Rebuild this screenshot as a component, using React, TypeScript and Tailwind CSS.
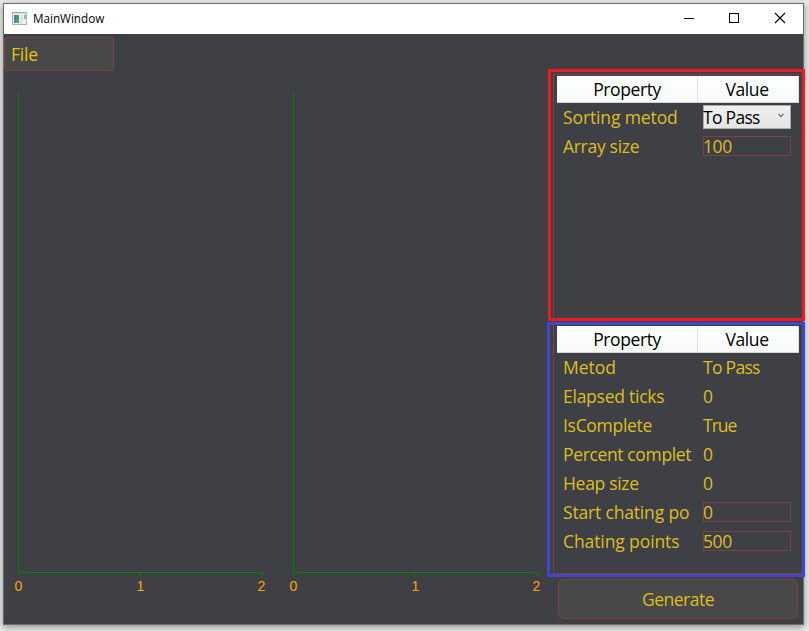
import React from "react";

type Kind = "text" | "input" | "select";
type Row = { label: string; value: string; kind: Kind; track: string; valueTrack: string };

const settings: Row[] = [
  { label: "Sorting metod", value: "To Pass", kind: "select", track: "tracking-[-0.12px]", valueTrack: "tracking-[-0.7px]" },
  { label: "Array size", value: "100", kind: "input", track: "tracking-[-0.3px]", valueTrack: "tracking-[-0.4px]" },
];

const stats: Row[] = [
  { label: "Metod", value: "To Pass", kind: "text", track: "tracking-[0px]", valueTrack: "tracking-[-0.7px]" },
  { label: "Elapsed ticks", value: "0", kind: "text", track: "tracking-[-0.25px]", valueTrack: "tracking-[0px]" },
  { label: "IsComplete", value: "True", kind: "text", track: "tracking-[-0.3px]", valueTrack: "tracking-[-1px]" },
  { label: "Percent complet", value: "0", kind: "text", track: "tracking-[-0.36px]", valueTrack: "tracking-[0px]" },
  { label: "Heap size", value: "0", kind: "text", track: "tracking-[-0.3px]", valueTrack: "tracking-[0px]" },
  { label: "Start chating po", value: "0", kind: "input", track: "tracking-[-0.17px]", valueTrack: "tracking-[0px]" },
  { label: "Chating points", value: "500", kind: "input", track: "tracking-[-0.1px]", valueTrack: "tracking-[-0.4px]" },
];

function Value({ row }: { row: Row }) {
  if (row.kind === "select") {
    return (
      <div className="mt-[2px] flex h-6 w-[88px] items-center justify-between border border-[#acacac] bg-gradient-to-b from-[#f0f0f0] to-[#e5e5e5] pr-[6px] leading-6 text-black">
        <span className={"-ml-px " + row.valueTrack}>{row.value}</span>
        <svg width="6" height="5" viewBox="0 0 6 5" className="mb-[3px]">
          <path d="M0.6 0.8 L3 3.6 L5.4 0.8" fill="none" stroke="#606060" strokeWidth="1.1" />
        </svg>
      </div>
    );
  }
  if (row.kind === "input") {
    return (
      <div className="mt-1 h-5 w-[88px] border border-[#7f4144] leading-[19px]">
        <span className={"-ml-px " + row.valueTrack}>{row.value}</span>
      </div>
    );
  }
  return <div className={"leading-[29px] " + row.valueTrack}>{row.value}</div>;
}

function Table({ rows }: { rows: Row[] }) {
  return (
    <div className="h-[250px] w-[250px] border border-[#7f4144] pl-[3px] pt-px text-[17.5px] text-[#dcbe1e]">
      <div className="flex h-[27px] w-[242px] border-b border-[#d5d5d5] bg-gradient-to-b from-white to-[#f6faf9] text-center leading-[27px] tracking-[-0.4px] text-black">
        <div className="w-[141px] border-r border-[#dfe3e3]">Property</div>
        <div className="w-[101px] border-r border-[#dfe3e3] pr-[2px]">Value</div>
      </div>
      {rows.map((row) => (
        <div key={row.label} className="flex h-[29px] whitespace-nowrap pl-[6px]">
          <div className={"w-[140px] leading-[29px] " + row.track}>{row.label}</div>
          <Value row={row} />
        </div>
      ))}
    </div>
  );
}

function Axes() {
  return (
    <div className="w-[275px]">
      <svg width="275" height="490" shapeRendering="crispEdges">
        <path d="M14 1h1v486h-1z M14 482h245v1h-245z M136 482h1v5h-1z M258 482h1v5h-1z" fill="#008000" />
      </svg>
      <div className="-mt-[2px] flex pl-[10.5px] font-['Liberation_Sans',Arial,sans-serif] text-[14px] leading-4 text-[#ffa500]">
        <span className="w-[122px]">0</span>
        <span className="w-[121px]">1</span>
        <span>2</span>
      </div>
    </div>
  );
}

export default function App() {
  return (
    <div className="relative h-[631px] w-[809px] overflow-hidden bg-[#e9e9e9] pl-[3px] pt-[3px] font-['Open_Sans','Noto_Sans',sans-serif]">
      <div className="flex h-[622px] w-[801px] flex-col border border-[#6d6e71] bg-[#3f4045] shadow-[0_2px_7px_rgba(0,0,0,0.4)]">
        <header className="flex h-[30px] shrink-0 items-center bg-white pl-2 text-black">
          <svg width="15" height="13" viewBox="0 0 15 13" className="-mt-[2px]">
            <rect x="0.5" y="0.5" width="14" height="12" fill="#eef0f2" stroke="#a9b0b6" />
            <rect x="1" y="1" width="13" height="1" fill="#d3d9df" />
            <rect x="2" y="3" width="5" height="8" fill="#4c8f92" />
            <rect x="2" y="3" width="2" height="4" fill="#4c79b5" />
            <rect x="4" y="7" width="3" height="4" fill="#56a176" />
            <rect x="8" y="3" width="3" height="8" fill="#dfe2e5" />
            <rect x="12" y="3" width="2" height="4" fill="#8db6ce" />
          </svg>
          <span className="ml-[6px] grow text-[11.7px]">MainWindow</span>
          <svg width="119" height="30" viewBox="0 0 119 30">
            <path d="M0 14h10v1H0z" fill="#000" />
            <rect x="45.5" y="9.5" width="9" height="9" fill="none" stroke="#000" shapeRendering="crispEdges" />
            <path d="M91 9l10 10M101 9L91 19" stroke="#000" strokeWidth="1.1" />
          </svg>
        </header>
        <div className="flex">
          <main className="w-[549px]">
            <div className="mt-[3px] h-[34px] w-[110px] rounded-[3px] border border-[#7f4144] bg-[#484848] pl-[6px] text-[17.5px] leading-[32px] tracking-[-0.2px] text-[#e6c400]">
              File
            </div>
            <div className="mt-[19px] flex">
              <Axes />
              <Axes />
            </div>
          </main>
          <aside className="pt-10">
            <Table rows={settings} />
            <Table rows={stats} />
            <button className="ml-[5px] mt-[5px] block h-10 w-[240px] rounded-[6px] border border-[#7f4144] bg-[#484848] text-center text-[17.5px] leading-[38px] tracking-[-0.5px] text-[#dcbe1e]">
              Generate
            </button>
          </aside>
        </div>
      </div>
      <div className="absolute left-[548px] top-[69px] h-[252px] w-[257px] border-[3px] border-[#ed1c24]" />
      <div className="absolute left-[547px] top-[322px] h-[255px] w-[258px] border-[3px] border-[#3f48cc]" />
    </div>
  );
}
